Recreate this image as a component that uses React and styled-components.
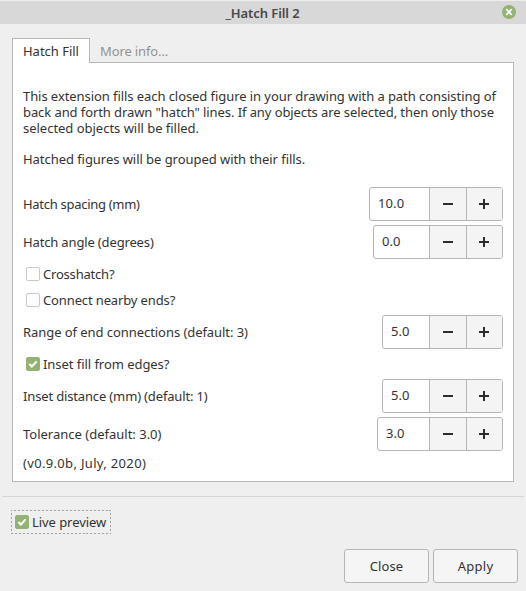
import React from 'react';
import styled, { createGlobalStyle } from 'styled-components';

const GlobalStyle = createGlobalStyle`
  * { box-sizing: border-box; }
  body {
    margin: 0;
    background: #efefef;
    color: #333;
    font: 13px/16px "Noto Sans", "Open Sans", sans-serif;
  }
  button, input { font: inherit; color: inherit; }
`;

const Dialog = styled.div`
  width: 526px;
  height: 591px;
  display: flex;
  flex-direction: column;
  background: #efefef;
  overflow: hidden;
`;

const TitleBar = styled.header`
  height: 24px;
  border-top: 1px solid #ededed;
  background: #d8d8d8;
  display: grid;
  grid-template-columns: 30px 1fr 30px;
  align-items: center;
  flex: none;
`;

const Title = styled.h1`
  grid-column: 2;
  margin: 0 1px 0 0;
  text-align: center;
  font-size: 13px;
  font-weight: 600;
  line-height: 16px;
  color: #484848;
`;

const CloseIcon = styled.button`
  width: 14px;
  height: 14px;
  margin: -1px 0 0 6px;
  padding: 0;
  border: 0;
  border-radius: 50%;
  background: #92b372;
  display: grid;
  place-items: center;
`;

const Notebook = styled.section`
  margin: 14px 12px 0;
  display: flex;
  flex-direction: column;
`;

const Tabs = styled.nav`
  height: 25px;
  display: flex;
`;

const Tab = styled.div`
  height: ${(p) => (p.$active ? 25 : 24)}px;
  padding: 4px ${(p) => (p.$active ? 10 : 9)}px 0;
  width: ${(p) => (p.$active ? 78 : 90)}px;
  white-space: nowrap;
  color: ${(p) => (p.$active ? '#333' : '#929292')};
  background: ${(p) => (p.$active ? '#fff' : 'transparent')};
  border: 1px solid ${(p) => (p.$active ? '#b6b6b6' : 'transparent')};
  border-bottom: 0;
  z-index: 1;
`;

const Page = styled.div`
  height: 420px;
  margin-top: -1px;
  padding: 25px 10px 0;
  border: 1px solid #b6b6b6;
  background: #fff;
  display: flex;
  flex-direction: column;
`;

const Description = styled.div`
  height: 99px;
  display: flex;
  flex-direction: column;
`;

const Paragraph = styled.p`
  margin: 0 0 15px;
`;

const Fields = styled.div`
  display: flex;
  flex-direction: column;
  gap: 4px;
`;

const Row = styled.div`
  display: flex;
  justify-content: space-between;
  align-items: center;
  height: 34px;
`;

const Text = styled.span`
  letter-spacing: ${(p) => p.$track || 0}px;
  white-space: nowrap;
`;

const TextLine = styled(Text)`
  display: block;
  height: 16px;
`;

const Spinner = styled.div`
  width: ${(p) => p.$width}px;
  height: 34px;
  display: grid;
  grid-template-columns: 1fr 37px 36px;
  border: 1px solid #b6b6b6;
  border-radius: 3px;
  background: #fff;
  overflow: hidden;
`;

const Value = styled.input`
  min-width: 0;
  width: 100%;
  padding: 0 0 2px 8px;
  border: 0;
  outline: 0;
  background: transparent;
  letter-spacing: 0.1px;
`;

const StepButton = styled.button`
  padding: 0;
  border: 0;
  border-left: 1px solid #b6b6b6;
  background: #f4f4f4;
  display: grid;
  place-items: center;

  &:last-child { padding-right: 1px; }
`;

const CheckRow = styled.label`
  height: 22px;
  padding-left: 3px;
  display: flex;
  align-items: center;
  gap: 3px;
`;

const Box = styled.span`
  width: 14px;
  height: 14px;
  flex: none;
  border: 1px solid ${(p) => (p.$checked ? '#92b372' : '#c9c9c9')};
  border-radius: 2px;
  background: ${(p) => (p.$checked ? '#92b372' : '#fff')};
  display: grid;
  place-items: center;
`;

const Version = styled.div`
  height: 16px;
`;

const Separator = styled.hr`
  width: 522px;
  height: 1px;
  margin: 14px 2px 13px;
  border: 0;
  background: #d6d6d6;
  flex: none;
`;

const Preview = styled.label`
  width: 100px;
  height: 24px;
  margin-left: 11px;
  padding-left: 3px;
  border: 1px dashed #b0b0b0;
  border-image: repeating-linear-gradient(135deg, #a6a6a6 0 1.4px, #e6e6e6 1.4px 2.8px) 1;
  display: flex;
  align-items: center;
  gap: 3px;
  flex: none;
`;

const Actions = styled.footer`
  margin: 15px 8px 0;
  display: flex;
  justify-content: flex-end;
  gap: 4px;
`;

const ActionButton = styled.button`
  width: 85px;
  height: 34px;
  padding: 0 0 1px;
  border: 1px solid #b6b6b6;
  border-radius: 3px;
  background: #f5f5f5;
`;

function Check({ checked }) {
  return (
    <Box $checked={checked}>
      {checked && (
        <svg width="12" height="12" viewBox="0 0 12 12" fill="none">
          <path d="M2.3 6.1 4.9 8.5 9.7 3.4" stroke="#fff" strokeWidth="2.1" />
        </svg>
      )}
    </Box>
  );
}

function SpinField({ label, track, value, width }) {
  return (
    <Row>
      <Text $track={track}>{label}</Text>
      <Spinner $width={width}>
        <Value defaultValue={value} aria-label={label} />
        <StepButton aria-label="Decrease">
          <svg width="10" height="10" viewBox="0 0 10 10">
            <path d="M0 4h10v2H0z" fill="#2d2d2d" />
          </svg>
        </StepButton>
        <StepButton aria-label="Increase">
          <svg width="10" height="10" viewBox="0 0 10 10">
            <path d="M4 0h2v4h4v2H6v4H4V6H0V4h4z" fill="#2d2d2d" />
          </svg>
        </StepButton>
      </Spinner>
    </Row>
  );
}

function CheckField({ label, track, checked }) {
  return (
    <CheckRow>
      <Check checked={checked} />
      <Text $track={track}>{label}</Text>
    </CheckRow>
  );
}

export default function App() {
  return (
    <Dialog>
      <GlobalStyle />
      <TitleBar>
        <Title><Text $track={-0.08}>_Hatch Fill 2</Text></Title>
        <CloseIcon aria-label="Close window">
          <svg width="8" height="8" viewBox="0 0 8 8">
            <path d="M1.2 1.2 6.8 6.8M6.8 1.2 1.2 6.8" stroke="#fff" strokeWidth="1.9" />
          </svg>
        </CloseIcon>
      </TitleBar>

      <Notebook>
        <Tabs>
          <Tab $active><Text $track={-0.02}>Hatch Fill</Text></Tab>
          <Tab><Text $track={-0.13}>More info...</Text></Tab>
        </Tabs>
        <Page>
          <Description>
            <Paragraph>
              <TextLine $track={-0.07}>This extension fills each closed figure in your drawing with a path consisting of</TextLine>
              <TextLine $track={-0.085}>back and forth drawn "hatch" lines. If any objects are selected, then only those</TextLine>
              <TextLine $track={-0.02}>selected objects will be filled.</TextLine>
            </Paragraph>
            <Paragraph>
              <TextLine $track={-0.05}>Hatched figures will be grouped with their fills.</TextLine>
            </Paragraph>
          </Description>
          <Fields>
            <SpinField label="Hatch spacing (mm)" track={-0.29} value="10.0" width={134} />
            <SpinField label="Hatch angle (degrees)" track={-0.15} value="0.0" width={130} />
            <CheckField label="Crosshatch?" track={-0.2} />
            <CheckField label="Connect nearby ends?" track={-0.13} />
            <SpinField label="Range of end connections (default: 3)" track={-0.06} value="5.0" width={121} />
            <CheckField label="Inset fill from edges?" track={-0.05} checked />
            <SpinField label="Inset distance (mm) (default: 1)" track={-0.15} value="5.0" width={121} />
            <SpinField label="Tolerance (default: 3.0)" value="3.0" width={126} />
            <Version><Text $track={0.33}>(v0.9.0b, July, 2020)</Text></Version>
          </Fields>
        </Page>
      </Notebook>

      <Separator />
      <Preview>
        <Check checked />
        <Text $track={-0.06}>Live preview</Text>
      </Preview>
      <Actions>
        <ActionButton><Text $track={0.1}>Close</Text></ActionButton>
        <ActionButton><Text $track={0.25}>Apply</Text></ActionButton>
      </Actions>
    </Dialog>
  );
}
